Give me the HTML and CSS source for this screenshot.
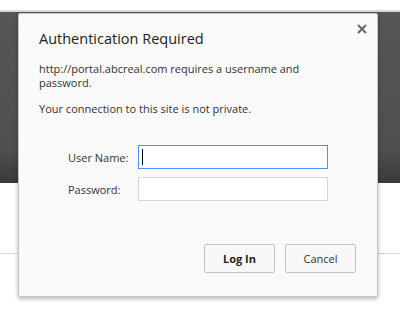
FILE: index.html
```html
<!DOCTYPE html>
<html lang="en">
  <head>
    <meta charset="UTF-8" />
    <title>Authentication Required</title>
    <link rel="stylesheet" href="styles.css">
  </head>
  <body>
    <div class="page">
      <div class="top-strip"></div>
      <div class="dark-band"></div>
      <div class="lower">
        <div class="rule"></div>
      </div>
    </div>

    <div class="dialog">
      <button class="close" aria-label="Close">
        <svg width="10" height="10" viewBox="0 0 10 10">
          <path d="M1 1 L9 9 M9 1 L1 9" stroke="#666" stroke-width="2" />
        </svg>
      </button>
      <h1>Authentication Required</h1>
      <p class="msg">http://portal.abcreal.com requires a username and password.</p>
      <p>Your connection to this site is not private.</p>

      <form class="fields">
        <label for="user">User Name:</label>
        <div class="input focused" id="user"><span class="caret"></span></div>
        <label for="pass">Password:</label>
        <div class="input" id="pass"></div>
      </form>

      <div class="actions">
        <button class="btn btn-primary">Log In</button>
        <button class="btn">Cancel</button>
      </div>
    </div>
  </body>
</html>
```

FILE: styles.css
```css
body {
  margin: 0;
  font-family: "Open Sans", "Noto Sans", sans-serif;
  background: #fff;
  overflow: hidden;
}
.page {
  height: 316px;
  display: flex;
  flex-direction: column;
}
.top-strip {
  height: 10px;
  background: #fff;
  border-bottom: 2px solid #d8d8d8;
}
.dark-band {
  height: 171px;
  background: linear-gradient(#565656 0%, #4f4f4f 80%, #3a3a3a 100%);
}
.lower {
  flex: 1;
  padding-top: 70px;
}
.rule {
  height: 1px;
  background: #d4d4d4;
}
.dialog {
  position: absolute;
  left: 18px;
  top: 13px;
  width: 318px;
  height: 268px;
  padding: 14px 20px 0 20px;
  background: #fafafa;
  border: 1px solid #c6c6c6;
  border-radius: 2px;
  box-shadow: 0 2px 4px rgba(0, 0, 0, 0.3);
  color: #333;
}
.close {
  position: absolute;
  right: 9px;
  top: 8px;
  border: none;
  background: none;
  padding: 0;
  width: 12px;
  height: 12px;
}
h1 {
  margin: 0 0 12px;
  font-size: 14.5px;
  font-weight: normal;
  line-height: 22px;
  color: #222;
}
p {
  margin: 0 0 12px;
  font-size: 11px;
  line-height: 14px;
  color: #333;
}
.msg {
  width: 275px;
}
.fields {
  display: grid;
  grid-template-columns: 70px 190px;
  row-gap: 8px;
  align-items: center;
  margin: 29px 0 0 29px;
  font-size: 11px;
}
.input {
  height: 22px;
  background: #fff;
  border: 1px solid #d6d6d6;
}
.input.focused {
  border-color: #4d90fe;
}
.caret {
  display: block;
  width: 1px;
  height: 16px;
  margin: 3px 0 0 3px;
  background: #000;
}
.actions {
  display: flex;
  justify-content: flex-end;
  gap: 10px;
  margin: 43px 1px 0 0;
}
.btn {
  width: 71px;
  height: 29px;
  font-family: inherit;
  font-size: 11px;
  color: #333;
  background: #f8f8f8;
  border: 1px solid #c4c4c4;
  border-radius: 2px;
}
.btn-primary {
  font-weight: bold;
  color: #222;
}
```
